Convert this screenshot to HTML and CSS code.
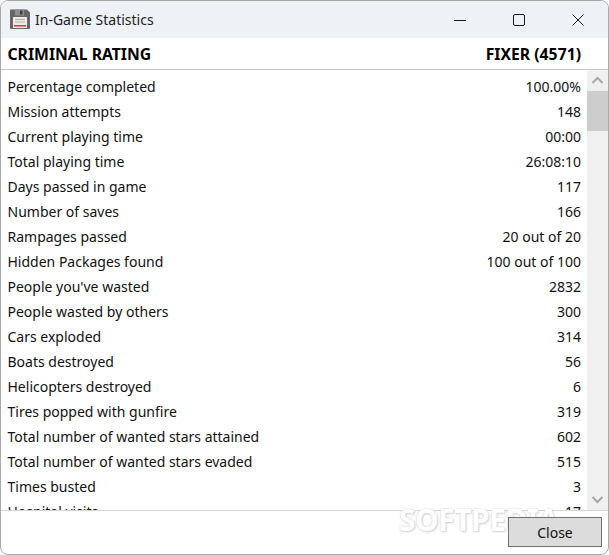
FILE: index.html
```html
<!DOCTYPE html>
<html lang="en">
<head>
<meta charset="utf-8">
<title>In-Game Statistics</title>
<link rel="stylesheet" href="styles.css">
</head>
<body>
<div class="window">
  <header class="titlebar">
    <svg class="app-icon" width="22" height="22" viewBox="0 0 22 22">
      <path d="M1 1.500h17l3 3V20a1 1 0 0 1-1 1H2a1 1 0 0 1-1-1z" fill="#666"/>
      <rect x="6" y="1.500" width="9" height="6" fill="#8e8e8e"/>
      <rect x="11" y="2.500" width="2.500" height="4" fill="#3e3e3e"/>
      <rect x="4" y="9" width="14" height="11" fill="#efe9e6"/>
      <rect x="6" y="11" width="10" height="1" fill="#b9b4b2"/>
      <rect x="6" y="13.500" width="10" height="1" fill="#b9b4b2"/>
      <rect x="5" y="17" width="12" height="1.500" fill="#b8404a"/>
    </svg>
    <span class="title">In-Game Statistics</span>
    <div class="controls">
      <svg width="14" height="14" viewBox="0 0 14 14"><path d="M1 7.500h12" stroke="#1a1a1a" fill="none"/></svg>
      <svg width="14" height="14" viewBox="0 0 14 14"><rect x="1.500" y="1.500" width="11" height="11" rx="1.500" stroke="#1a1a1a" fill="none"/></svg>
      <svg width="14" height="14" viewBox="0 0 14 14"><path d="M1.500 1.500l11 11M12.500 1.500l-11 11" stroke="#1a1a1a" fill="none"/></svg>
    </div>
  </header>
  <div class="rating"><span>CRIMINAL RATING</span><span>FIXER (4571)</span></div>
  <div class="content">
    <div class="list">
      <div class="row"><span>Percentage completed</span><span>100.00%</span></div>
      <div class="row"><span>Mission attempts</span><span>148</span></div>
      <div class="row"><span>Current playing time</span><span>00:00</span></div>
      <div class="row"><span>Total playing time</span><span>26:08:10</span></div>
      <div class="row"><span>Days passed in game</span><span>117</span></div>
      <div class="row"><span>Number of saves</span><span>166</span></div>
      <div class="row"><span>Rampages passed</span><span>20 out of 20</span></div>
      <div class="row"><span>Hidden Packages found</span><span>100 out of 100</span></div>
      <div class="row"><span>People you've wasted</span><span>2832</span></div>
      <div class="row"><span>People wasted by others</span><span>300</span></div>
      <div class="row"><span>Cars exploded</span><span>314</span></div>
      <div class="row"><span>Boats destroyed</span><span>56</span></div>
      <div class="row"><span>Helicopters destroyed</span><span>6</span></div>
      <div class="row"><span>Tires popped with gunfire</span><span>319</span></div>
      <div class="row"><span>Total number of wanted stars attained</span><span>602</span></div>
      <div class="row"><span>Total number of wanted stars evaded</span><span>515</span></div>
      <div class="row"><span>Times busted</span><span>3</span></div>
      <div class="row"><span>Hospital visits</span><span>17</span></div>
    </div>
    <div class="scrollbar">
      <svg class="arrow" width="21" height="21" viewBox="0 0 21 21"><path d="M5.500 13l5-5 5 5" stroke="#a6a6a6" stroke-width="2" fill="none"/></svg>
      <div class="thumb"></div>
      <div class="track"></div>
      <svg class="arrow" width="21" height="21" viewBox="0 0 21 21"><path d="M5.500 8l5 5 5-5" stroke="#a6a6a6" stroke-width="2" fill="none"/></svg>
    </div>
  </div>
  <footer class="footer"><button class="close" type="button">Close</button></footer>
  <div class="watermark">SOFTPEDIA</div>
</div>
</body>
</html>
```
FILE: styles.css
```css
* { box-sizing: border-box; }
html, body { margin: 0; height: 100%; background: #fff; }
body { font-family: "Noto Sans", "Open Sans", sans-serif; font-size: 14px; color: #111; }
.window {
  position: relative;
  width: 609px;
  height: 555px;
  display: flex;
  flex-direction: column;
  border: 1px solid #a9a9a9;
  border-radius: 8px;
  overflow: hidden;
  background: #fff;
}
.titlebar {
  flex: 0 0 37px;
  display: flex;
  align-items: center;
  padding: 0 0 0 8px;
  background: #eef2f7;
}
.app-icon { flex: none; margin-bottom: 2px; }
.title { margin-left: 4px; font-size: 14px; color: #222; }
.controls { margin-left: auto; display: flex; gap: 45px; padding-right: 23px; }
.rating {
  flex: 0 0 32px;
  display: flex;
  justify-content: space-between;
  align-items: center;
  padding: 0 27px 0 6.500px;
  font-weight: 700;
  font-size: 15.750px;
  color: #000;
  border-bottom: 1px solid #c8c8c8;
}
.content { flex: 1; min-height: 0; display: flex; overflow: hidden; }
.list { flex: 1; min-width: 0; overflow: hidden; padding: 4px 6px 0 6.500px; }
.row { height: 25px; display: flex; justify-content: space-between; align-items: center; }
.scrollbar { flex: 0 0 21px; display: flex; flex-direction: column; background: #f0f0f0; }
.arrow { flex: none; display: block; }
.thumb { flex: 0 0 40px; background: #cdcdcd; }
.track { flex: 1; }
.footer {
  flex: 0 0 44px;
  display: flex;
  justify-content: flex-end;
  align-items: flex-start;
  padding: 6px 6px 0 0;
  border-top: 1px solid #d6d6d6;
}
.close {
  position: relative;
  z-index: 1;
  width: 94px;
  height: 30px;
  padding: 0;
  background: #dcdcdc;
  border: 1px solid #707070;
  font: inherit;
  color: #111;
}
.watermark {
  position: absolute;
  left: 398px;
  top: 504px;
  line-height: 30px;
  font-size: 30px;
  font-weight: 700;
  letter-spacing: -0.500px;
  color: #fff;
  text-shadow: 0 0 2px #c8c8c8, 1px 1px 2px #d4d4d4;
  pointer-events: none;
}
```
